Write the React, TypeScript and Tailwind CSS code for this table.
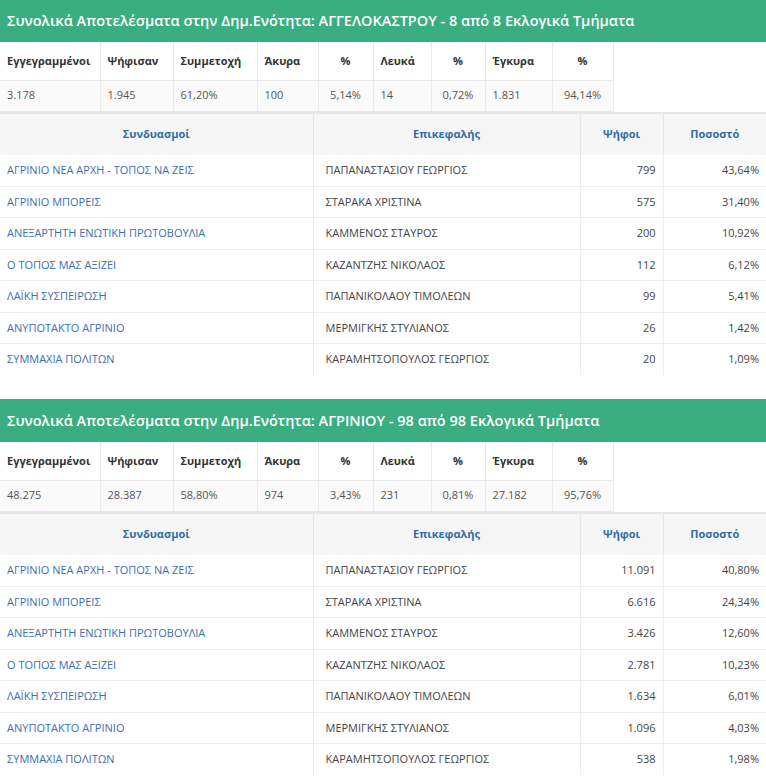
import React from 'react';

type Party = { name: string; leader: string; votes: string; pct: string };
type Section = { area: string; count: string; stats: string[]; parties: Party[] };

const STAT_LABELS = ['Εγγεγραμμένοι', 'Ψήφισαν', 'Συμμετοχή', 'Άκυρα', '%', 'Λευκά', '%', 'Έγκυρα', '%'];
const STAT_WIDTHS = ['w-[100px]', 'w-[73px]', 'w-[84px]', 'w-[61px]', 'w-[55px]', 'w-[58px]', 'w-[54px]', 'w-[67px]', 'w-[61px]'];
const PCT_COLS = [4, 6, 8];

const NAMES = [
  ['ΑΓΡΙΝΙΟ ΝΕΑ ΑΡΧΗ - ΤΟΠΟΣ ΝΑ ΖΕΙΣ', 'ΠΑΠΑΝΑΣΤΑΣΙΟΥ ΓΕΩΡΓΙΟΣ'],
  ['ΑΓΡΙΝΙΟ ΜΠΟΡΕΙΣ', 'ΣΤΑΡΑΚΑ ΧΡΙΣΤΙΝΑ'],
  ['ΑΝΕΞΑΡΤΗΤΗ ΕΝΩΤΙΚΗ ΠΡΩΤΟΒΟΥΛΙΑ', 'ΚΑΜΜΕΝΟΣ ΣΤΑΥΡΟΣ'],
  ['Ο ΤΟΠΟΣ ΜΑΣ ΑΞΙΖΕΙ', 'ΚΑΖΑΝΤΖΗΣ ΝΙΚΟΛΑΟΣ'],
  ['ΛΑΪΚΗ ΣΥΣΠΕΙΡΩΣΗ', 'ΠΑΠΑΝΙΚΟΛΑΟΥ ΤΙΜΟΛΕΩΝ'],
  ['ΑΝΥΠΟΤΑΚΤΟ ΑΓΡΙΝΙΟ', 'ΜΕΡΜΙΓΚΗΣ ΣΤΥΛΙΑΝΟΣ'],
  ['ΣΥΜΜΑΧΙΑ ΠΟΛΙΤΩΝ', 'ΚΑΡΑΜΗΤΣΟΠΟΥΛΟΣ ΓΕΩΡΓΙΟΣ'],
];

const build = (results: [string, string][]): Party[] =>
  NAMES.map(([name, leader], i) => ({ name, leader, votes: results[i][0], pct: results[i][1] }));

const SECTIONS: Section[] = [
  {
    area: 'ΑΓΓΕΛΟΚΑΣΤΡΟΥ',
    count: '8 από 8',
    stats: ['3.178', '1.945', '61,20%', '100', '5,14%', '14', '0,72%', '1.831', '94,14%'],
    parties: build([
      ['799', '43,64%'],
      ['575', '31,40%'],
      ['200', '10,92%'],
      ['112', '6,12%'],
      ['99', '5,41%'],
      ['26', '1,42%'],
      ['20', '1,09%'],
    ]),
  },
  {
    area: 'ΑΓΡΙΝΙΟΥ',
    count: '98 από 98',
    stats: ['48.275', '28.387', '58,80%', '974', '3,43%', '231', '0,81%', '27.182', '95,76%'],
    parties: build([
      ['11.091', '40,80%'],
      ['6.616', '24,34%'],
      ['3.426', '12,60%'],
      ['2.781', '10,23%'],
      ['1.634', '6,01%'],
      ['1.096', '4,03%'],
      ['538', '1,98%'],
    ]),
  },
];

const ResultsBlock: React.FC<{ section: Section }> = ({ section }) => {
  return (
    <div>
      <div className="h-[43px] bg-[#3aae81] px-[7px] flex items-center text-white text-[14.5px] font-semibold">
        Συνολικά Αποτελέσματα στην Δημ.Ενότητα: {section.area} - {section.count} Εκλογικά Τμήματα
      </div>

      <table className="table-fixed border-collapse w-[613px] text-[11px] text-[#333]">
        <thead>
          <tr className="h-[38px]">
            {STAT_LABELS.map((label, i) => (
              <th
                key={i}
                className={`${STAT_WIDTHS[i]} border border-[#eaeaea] border-t-0 px-[7px] font-bold ${i === 0 ? 'border-l-0' : ''} ${PCT_COLS.includes(i) ? 'text-center' : 'text-left'}`}
              >
                {label}
              </th>
            ))}
          </tr>
        </thead>
        <tbody>
          <tr className="h-[31px] bg-[#fafafa]">
            {section.stats.map((value, i) => (
              <td
                key={i}
                className={`border border-[#eaeaea] px-[7px] text-[#555] ${i === 0 ? 'border-l-0' : ''} ${PCT_COLS.includes(i) ? 'text-center' : 'text-left'}`}
              >
                {value}
              </td>
            ))}
          </tr>
        </tbody>
      </table>

      <table className="table-fixed border-collapse w-full text-[11px]">
        <thead>
          <tr className="h-[42px] bg-[#f6f6f6] border-t-2 border-[#e6e6e6]">
            <th className="w-[313px] font-bold text-[#2e6da4] text-center">Συνδυασμοί</th>
            <th className="w-[267px] font-bold text-[#2e6da4] text-center border-l border-[#e6e6e6]">Επικεφαλής</th>
            <th className="w-[83px] font-bold text-[#2e6da4] text-center border-l border-[#e6e6e6]">Ψήφοι</th>
            <th className="font-bold text-[#2e6da4] text-center border-l border-[#e6e6e6]">Ποσοστό</th>
          </tr>
        </thead>
        <tbody>
          {section.parties.map((p, i) => (
            <tr key={i} className={`h-[31.5px] ${i < section.parties.length - 1 ? 'border-b border-[#eeeeee]' : ''}`}>
              <td className="px-[7px] text-[#3a6fb0] whitespace-nowrap">{p.name}</td>
              <td className="px-[12px] text-[#444] border-l border-[#eeeeee] whitespace-nowrap">{p.leader}</td>
              <td className="px-[7px] text-[#444] text-right border-l border-[#eeeeee]">{p.votes}</td>
              <td className="px-[7px] text-[#444] text-right border-l border-[#eeeeee]">{p.pct}</td>
            </tr>
          ))}
        </tbody>
      </table>
    </div>
  );
};

export default function App() {
  return (
    <div className="w-[766px] bg-white -mt-[1px] font-['Open_Sans','Noto_Sans',sans-serif]">
      <div className="flex flex-col gap-[24px]">
        {SECTIONS.map((s, i) => (
          <ResultsBlock key={i} section={s} />
        ))}
      </div>
    </div>
  );
}
